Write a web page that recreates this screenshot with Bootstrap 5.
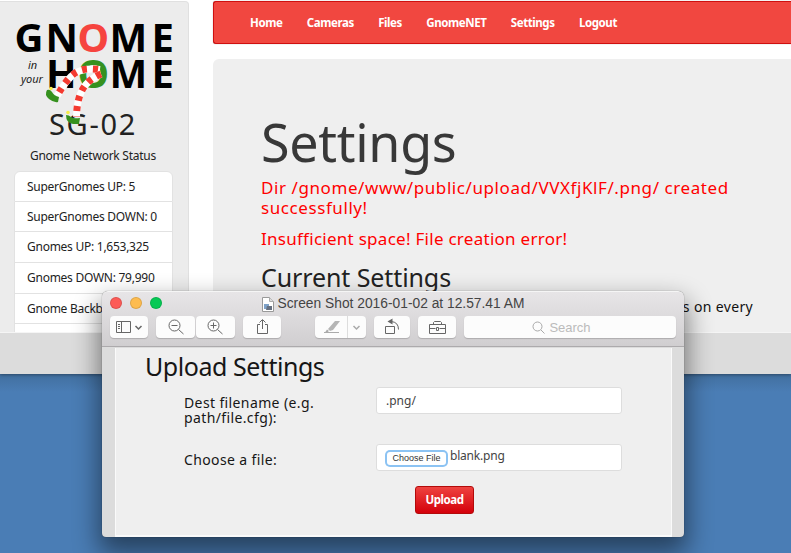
<!DOCTYPE html>
<html lang="en">
<head>
<meta charset="utf-8">
<meta name="viewport" content="width=device-width, initial-scale=1">
<title>Settings</title>
<link href="https://cdn.jsdelivr.net/npm/bootstrap@5.3.0/dist/css/bootstrap.min.css" rel="stylesheet">
<style>
body{font-family:"Noto Sans","Open Sans",sans-serif;font-size:12px;color:#222;background:#4a7cb5}
.desk{width:791px;height:553px;background:linear-gradient(#416f9f 374px,#4a7db5 392px)}
.browser-win{height:374px;background:#dcdcdc;box-shadow:0 1px 3px rgba(0,0,0,.35)}
.page-view{height:333px;background:#fff;border-bottom:1px solid #f5f5f5}
.side{width:189px;height:340px;margin-top:1px;background:#ececec;border:1px solid #e0e0e0;border-left:0;border-radius:0 4px 0 0}
.logo{width:189px;height:130px;margin-top:-2px;z-index:2}
.host{font-size:29px;line-height:34px;letter-spacing:1.7px;margin-top:-23px;padding-right:2px}
.status{line-height:18px;margin-top:6px;letter-spacing:-.25px;padding-right:2px}
.stats{width:159px;margin:6px 0 0 14px;letter-spacing:-.26px}
.stats .list-group-item{height:30.7px;padding:0 12px;line-height:30px;border-color:#e2e2e2;color:#222;white-space:nowrap}
.main-col{width:578px;margin-left:24px;padding-top:1px}
.topbar{height:43px;background:#f14740;border:1px solid #cf1010;border-right:0;border-radius:3px 0 0 3px;padding:0 0 0 36px;box-shadow:0 0 1px #888}
.topbar .nav-link{color:#fff;font-weight:700;font-size:11.5px;line-height:41px;padding:0;letter-spacing:-.42px;white-space:nowrap}
.topbar .nav{gap:24.4px}
.panel{height:290px;margin-top:15px;background:#efefef;border-radius:6px 0 0 0;padding:45px 0 0 48px}
.panel h1{font-size:52px;line-height:76px;font-weight:400;letter-spacing:-.3px;color:#383838;margin:0 0 -2px}
.msg{color:#f00;font-size:17px;line-height:19.5px;margin:0 0 12px;width:480px}
.msg-dir{letter-spacing:.58px}
.msg-space{letter-spacing:.27px}
.panel h2{font-size:25px;line-height:30px;letter-spacing:-.1px;font-weight:400;color:#222;margin:0;padding-top:1px}
.tail{font-size:14px;line-height:20px;letter-spacing:.35px;padding-right:38px;color:#111;margin-top:5px}
.preview{left:102px;top:291px;width:582px;height:246px;background:#dcdcdc;border-radius:6px 6px 4px 4px;box-shadow:0 0 1px rgba(0,0,0,.6),0 13px 26px 3px rgba(0,0,0,.48);z-index:5}
.chrome-bar{height:56px;background:linear-gradient(#e7e5e7,#d0ced0);border-bottom:1px solid #acaaac;border-radius:6px 6px 0 0;border-top:1px solid #f5f5f5}
.titlebar{height:24px;font-family:"Liberation Sans",sans-serif;font-size:13.8px;color:#444}
.dots{left:8px;top:5px;gap:8px}
.dot{width:12px;height:12px;border-radius:50%;border:1px solid rgba(0,0,0,.12)}
.dot-close{background:#fc5b57}
.dot-min{background:#fdbc4f}
.dot-max{background:#06c955}
.tools{padding-left:8px}
.tool{height:22px;background:#fcfcfc;border-radius:4px;box-shadow:0 1px 1px rgba(0,0,0,.18);color:#666}
.search-box{font:13px "Liberation Sans",sans-serif;color:#bbb;width:212px;margin-left:8px;padding-right:17px}
.sheet{height:189px;margin:1px 12px 0 13px;border:1px solid #fafafa;border-top-width:0;border-bottom-width:2px;background:#efefef;padding:1px 0 0 30px}
.sheet h2{font-size:25px;line-height:34px;letter-spacing:-.46px;font-weight:400;margin:0 0 0 -1px;color:#161616}
.fields{margin-left:38px}
.fields label{width:192px;font-size:14px;line-height:15px;letter-spacing:.38px;color:#161616}
.box-in{width:246px;height:27px;background:#fff;border:1px solid #ddd;border-radius:3px;padding:0 9px;color:#444}
.pick{font:9px/13px "Liberation Sans",sans-serif;width:59px;height:13px;color:#333;background:#fff;border-radius:3px;box-shadow:0 0 0 2px #8cc3f3;margin:1px 4px 0 1px;text-align:center}
.btn-send{width:59px;height:28px;margin:15px 0 0 269px;padding:0;font-size:11.5px;font-weight:700;letter-spacing:-.45px;color:#fff;background:linear-gradient(#ee4340,#d4000a);border:1px solid #b30a0a;border-radius:3px}
</style>
</head>
<body>
<div class="desk position-relative overflow-hidden">
  <div class="browser-win">
    <div class="page-view d-flex overflow-hidden">
      <aside class="side flex-shrink-0">
        <svg class="logo d-block position-relative" viewBox="0 0 189 130">
          <g font-family="Noto Sans" font-weight="700" font-size="40">
            <text y="52" x="14.500 45.500 77.500 109.500 151.500"><tspan>GN</tspan><tspan fill="#f6443f">O</tspan><tspan>ME</tspan></text>
            <text y="88" x="46 77.500 109.500 151.500">H<tspan fill="#36911f">O</tspan>ME</text>
          </g>
          <g font-family="Noto Sans" font-style="italic" font-size="11" fill="#222"><text x="28" y="69">in</text><text x="21" y="83" textLength="22">your</text></g>
          <g fill="none" stroke-width="7">
            <path d="M100 69.500C78 67 70 73 57 96" stroke="#fff"/>
            <path d="M98 69.500C78 67 70 73 57 96" stroke="#f43a30" stroke-dasharray="5 6"/>
            <path d="M101 74C85 81 77 92 76.500 117" stroke="#fff"/>
            <path d="M101 74C85 81 77 92 76.500 117" stroke="#f43a30" stroke-dasharray="5 5.500"/>
          </g>
          <g fill="#36911f"><path d="M47 90q-3 5 2 9 5 4 9 3l1-5q-5-1-7-5-2-3-5-2z"/><path d="M66 115q0 8 7 9h6l1-6q-7 1-9-1-2-2-5-2z"/></g>
          <g fill="#f7ee4a"><circle cx="51" cy="88.500" r="1.800"/><circle cx="68" cy="112.500" r="1.800"/></g>
        </svg>
        <div class="host text-center">SG-02</div>
        <div class="status text-center">Gnome Network Status</div>
        <ul class="list-group stats">
          <li class="list-group-item">SuperGnomes UP: 5</li>
          <li class="list-group-item">SuperGnomes DOWN: 0</li>
          <li class="list-group-item">Gnomes UP: 1,653,325</li>
          <li class="list-group-item">Gnomes DOWN: 79,990</li>
          <li class="list-group-item">Gnome Backb</li>
          <li class="list-group-item"></li>
        </ul>
      </aside>
      <main class="main-col flex-shrink-0">
        <nav class="topbar">
          <div class="nav flex-nowrap">
            <a class="nav-link">Home</a><a class="nav-link">Cameras</a><a class="nav-link">Files</a><a class="nav-link">GnomeNET</a><a class="nav-link">Settings</a><a class="nav-link">Logout</a>
          </div>
        </nav>
        <section class="panel">
          <h1>Settings</h1>
          <p class="msg msg-dir">Dir /gnome/www/public/upload/VVXfjKlF/.png/ created successfully!</p>
          <p class="msg msg-space">Insufficient space! File creation error!</p>
          <h2>Current Settings</h2>
          <p class="tail text-end mb-0">s on every</p>
        </section>
      </main>
    </div>
  </div>

  <div class="preview position-absolute overflow-hidden">
    <div class="chrome-bar">
      <div class="titlebar position-relative d-flex align-items-center justify-content-center">
        <div class="dots position-absolute d-flex"><i class="dot dot-close"></i><i class="dot dot-min"></i><i class="dot dot-max"></i></div>
        <svg width="12" height="15" class="me-1" viewBox="0 0 12 15"><path d="M.5.500h7l4 4v10H.500z" fill="#fff" stroke="#999"/><path d="M7.500.500v4h4" fill="#ddd" stroke="#aaa"/><path d="M2 7h5v5H2z" fill="#7ea1c8"/><path d="M5 9h5v4H4z" fill="#667080"/></svg>
        <span>Screen Shot 2016-01-02 at 12.57.41 AM</span>
      </div>
      <div class="tools d-flex">
        <div class="tool" style="width:38px"><svg width="38" height="22" fill="none" stroke="currentColor"><path d="M6.500 5.500h14v11h-14zM11.500 5.500v11M8 8.500h2M8 10.500h2M8 12.500h2"/><path d="M25.500 10l3 3 3-3" stroke-width="1.500"/></svg></div>
        <div class="tool" style="width:39px;margin-left:8px"><svg width="39" height="22" fill="none" stroke="currentColor"><circle cx="18.500" cy="9.500" r="5.500"/><path d="M22.500 13.500l5 4.500M15.500 9.500h6"/></svg></div>
        <div class="tool" style="width:39px;margin-left:1px"><svg width="39" height="22" fill="none" stroke="currentColor"><circle cx="17.500" cy="9.500" r="5.500"/><path d="M21.500 13.500l5 4.500M14.500 9.500h6M17.500 6.500v6"/></svg></div>
        <div class="tool" style="width:38px;margin-left:8px"><svg width="38" height="22" fill="none" stroke="currentColor"><path d="M17 8.500h-2.500v9h10v-9H22M19.500 13V4M16.500 6.500l3-3 3 3"/></svg></div>
        <div class="tool" style="width:51px;margin-left:34px"><svg width="51" height="22" fill="none" stroke="#aaa"><path d="M32.500 0v22" stroke="#ddd"/><path d="M13 13l7-8h5l-7 9-3 1z" fill="#b5b5b5" stroke="none"/><path d="M12 13.500l-2 3h2l2-1.500z" fill="#aaa" stroke="none"/><path d="M9 16.500h15"/><path d="M38.500 10l3 3 3-3" stroke-width="1.500"/></svg></div>
        <div class="tool" style="width:36px;margin-left:8px"><svg width="36" height="22" fill="none" stroke="currentColor"><path d="M11.500 10.500h9v7h-9zM17 5.500q7.500.5 7.500 8"/><path d="M13.500 5.500l5-3v6z" fill="currentColor" stroke="none"/></svg></div>
        <div class="tool" style="width:38px;margin-left:8px"><svg width="38" height="22" fill="none" stroke="currentColor"><path d="M11.500 8.500h16v9h-16zM11.500 12.500h6M21.500 12.500h6M18.500 11.500h2v3h-2zM15.500 8.500v-2l1-1h6l1 1v2"/></svg></div>
        <div class="tool search-box d-flex align-items-center justify-content-center"><svg width="13" height="13" class="me-1" fill="none" stroke="#aaa"><circle cx="5.500" cy="5.500" r="4.500"/><path d="M9 9l3.500 3.500"/></svg><span>Search</span></div>
      </div>
    </div>
    <div class="sheet">
      <h2>Upload Settings</h2>
      <div class="fields">
        <div class="d-flex mt-1"><label class="pt-2">Dest filename (e.g. path/file.cfg):</label><div class="box-in d-flex align-items-center">.png/</div></div>
        <div class="d-flex" style="margin-top:19px"><label class="pt-2">Choose a file:</label><div class="box-in d-flex align-items-center"><span class="pick">Choose File</span><span style="letter-spacing:-.2px;margin-top:-4px">blank.png</span></div></div>
      </div>
      <button class="btn btn-send">Upload</button>
    </div>
  </div>
</div>
<script src="https://cdn.jsdelivr.net/npm/bootstrap@5.3.0/dist/js/bootstrap.bundle.min.js"></script>
</body>
</html>
